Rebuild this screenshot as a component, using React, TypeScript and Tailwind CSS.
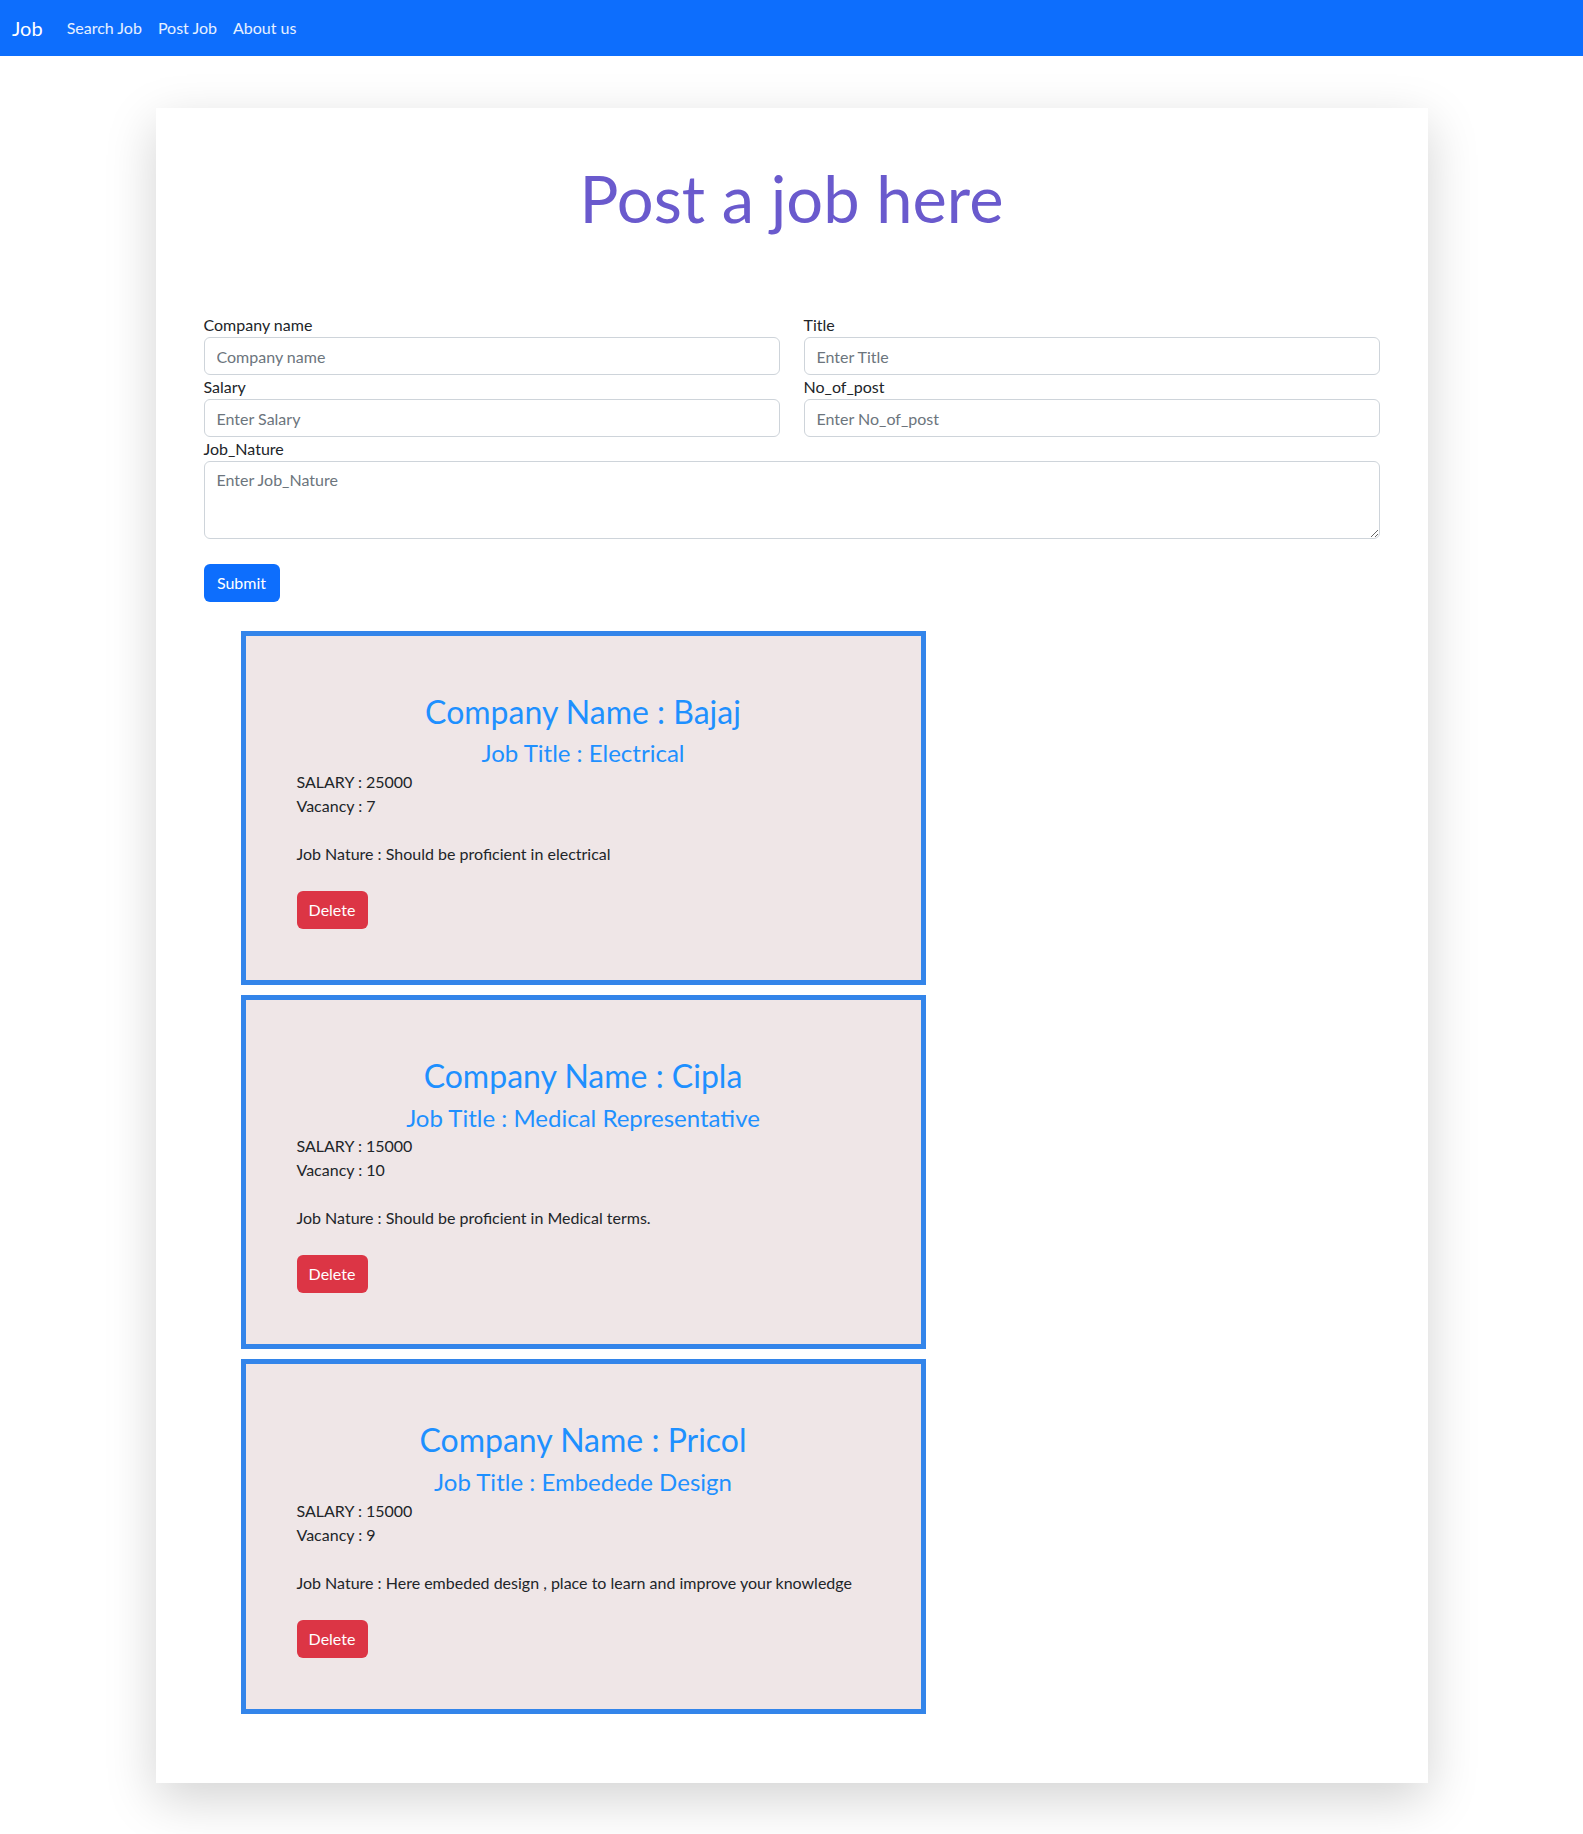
import React from 'react';

type Job = {
  company: string;
  title: string;
  salary: number;
  vacancy: number;
  nature: string;
};

const jobs: Job[] = [
  { company: 'Bajaj', title: 'Electrical', salary: 25000, vacancy: 7, nature: 'Should be proficient in electrical' },
  { company: 'Cipla', title: 'Medical Representative', salary: 15000, vacancy: 10, nature: 'Should be proficient in Medical terms.' },
  { company: 'Pricol', title: 'Embedede Design', salary: 15000, vacancy: 9, nature: 'Here embeded design , place to learn and improve your knowledge' },
];

const inputCls =
  'block w-full h-[38px] px-3 rounded-[6px] border border-[#ced4da] bg-white text-[16px] text-[#212529] placeholder:text-[#6c757d] outline-none';

const Field = ({ label, placeholder }: { label: string; placeholder: string }) => (
  <div>
    <label className="block text-[16px] leading-6 text-[#212529]">{label}</label>
    <input className={inputCls} placeholder={placeholder} />
  </div>
);

const JobCard = ({ job }: { job: Job }) => (
  <div className="w-[685px] border-[5px] border-[#3385ea] bg-[#efe6e7] pt-[57px] pb-[51px] px-[51px]">
    <h2 className="text-center text-[32px] leading-[1.2] text-[#1e90ff] mb-[8px]">Company Name : {job.company}</h2>
    <h4 className="text-center text-[24px] leading-[1.2] text-[#1e90ff] mb-[2px]">Job Title : {job.title}</h4>
    <p className="text-[16px] leading-6 text-[#212529]">SALARY : {job.salary}</p>
    <p className="text-[16px] leading-6 text-[#212529]">Vacancy : {job.vacancy}</p>
    <p className="mt-6 text-[16px] leading-6 text-[#212529] whitespace-nowrap">Job Nature : {job.nature}</p>
    <button className="mt-[25px] h-[38px] w-[71px] rounded-[6px] bg-[#dc3545] text-[16px] text-white">Delete</button>
  </div>
);

export default function App() {
  return (
    <div className="min-h-screen bg-white font-['Lato',sans-serif]">
      <nav className="h-14 bg-[#0d6efd] flex items-center pl-3">
        <span className="text-[20px] text-white mr-4">Job</span>
        <div className="flex items-center">
          {['Search Job', 'Post Job', 'About us'].map((l) => (
            <a key={l} className="px-2 text-[16px] text-white/90">
              {l}
            </a>
          ))}
        </div>
      </nav>

      <div className="w-[1272px] mx-auto mt-[52px] bg-white shadow-[0_16px_48px_rgba(0,0,0,0.175)] pt-[51px] px-12 pb-[69px]">
        <h1 className="text-center text-[65px] leading-[1.2] font-normal text-[#6a5acd] mb-[76px]">Post a job here</h1>

        <form>
          <div className="grid grid-cols-2 gap-x-6">
            <Field label="Company name" placeholder="Company name" />
            <Field label="Title" placeholder="Enter Title" />
            <Field label="Salary" placeholder="Enter Salary" />
            <Field label="No_of_post" placeholder="Enter No_of_post" />
          </div>
          <label className="block text-[16px] leading-6 text-[#212529]">Job_Nature</label>
          <textarea
            className="block w-full h-[78px] px-3 py-[6px] rounded-[6px] border border-[#ced4da] text-[16px] text-[#212529] placeholder:text-[#6c757d] outline-none"
            placeholder="Enter Job_Nature"
          />
          <button type="button" className="mt-[25px] h-[38px] w-[76px] rounded-[6px] bg-[#0d6efd] text-[16px] text-white">
            Submit
          </button>
        </form>

        <div className="mt-[29px] ml-[37px] flex flex-col gap-[10px]">
          {jobs.map((j) => (
            <JobCard key={j.company} job={j} />
          ))}
        </div>
      </div>
      <div className="h-[52px]" />
    </div>
  );
}
